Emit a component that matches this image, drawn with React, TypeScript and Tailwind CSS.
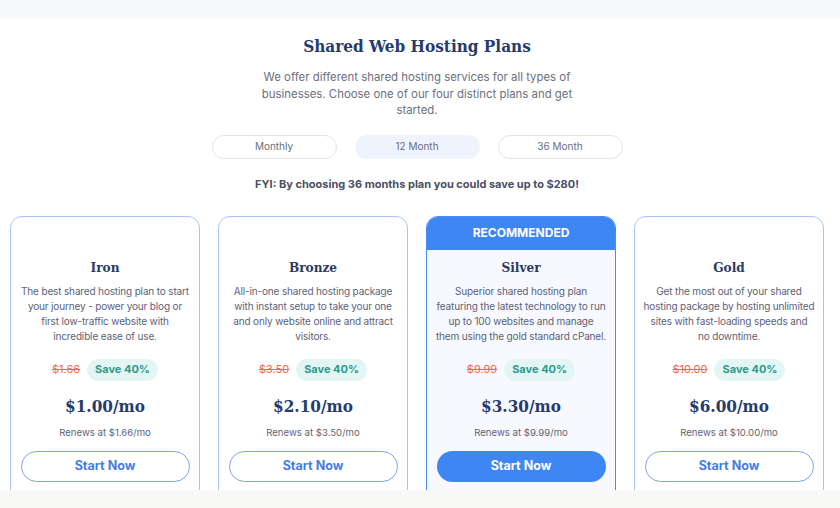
import React from "react";

const plans = [
  {
    name: "Iron",
    desc: ["The best shared hosting plan to start", "your journey - power your blog or", "first low-traffic website with", "incredible ease of use."],
    old: "$1.66",
    price: "$1.00/mo",
    renew: "Renews at $1.66/mo",
    rec: false,
  },
  {
    name: "Bronze",
    desc: ["All-in-one shared hosting package", "with instant setup to take your one", "and only website online and attract", "visitors."],
    old: "$3.50",
    price: "$2.10/mo",
    renew: "Renews at $3.50/mo",
    rec: false,
  },
  {
    name: "Silver",
    desc: ["Superior shared hosting plan", "featuring the latest technology to run", "up to 100 websites and manage", "them using the gold standard cPanel."],
    old: "$9.99",
    price: "$3.30/mo",
    renew: "Renews at $9.99/mo",
    rec: true,
  },
  {
    name: "Gold",
    desc: ["Get the most out of your shared", "hosting package by hosting unlimited", "sites with fast-loading speeds and", "no downtime."],
    old: "$10.00",
    price: "$6.00/mo",
    renew: "Renews at $10.00/mo",
    rec: false,
  },
];

const serif = { fontFamily: '"DejaVu Serif Condensed", "DejaVu Serif", "Liberation Serif", serif' };

export default function App() {
  return (
    <div className="w-[840px] h-[508px] bg-white overflow-hidden" style={{ fontFamily: 'Inter, "Noto Sans", sans-serif' }}>
      <div className="h-[18px] bg-[#f8f9fc]" />
      <div className="w-[834px] flex flex-col items-center">
        <h1 className="mt-[14px] text-[17px] leading-[28px] font-bold font-stretch-condensed text-[#263b6d]" style={serif}>
          Shared Web Hosting Plans
        </h1>
        <p className="mt-[9px] text-center text-[11.4px] leading-[16.5px] text-[#6b6f7c] whitespace-nowrap">
          <span className="block">We offer different shared hosting services for all types of</span>
          <span className="block">businesses. Choose one of our four distinct plans and get</span>
          <span className="block">started.</span>
        </p>
        <div className="mt-[16px] flex gap-[18px]">
          <div className="w-[125px] h-[24px] rounded-full border border-[#e1e4ea] flex items-center justify-center text-[10px] text-[#6b6f7c]">Monthly</div>
          <div className="w-[125px] h-[24px] rounded-full bg-[#eef3fd] flex items-center justify-center text-[10px] text-[#6b6f7c]">12 Month</div>
          <div className="w-[125px] h-[24px] rounded-full border border-[#e1e4ea] flex items-center justify-center text-[10px] text-[#6b6f7c]">36 Month</div>
        </div>
        <div className="mt-[16px] text-[11px] leading-[18px] font-bold text-[#4b5064]">
          FYI: By choosing 36 months plan you could save up to $280!
        </div>
      </div>
      <div className="mt-[23px] h-[274px] overflow-hidden pl-[10px] flex gap-[18px]">
        {plans.map((p) => (
          <div
            key={p.name}
            className={
              "w-[190px] h-[300px] shrink-0 rounded-[12px] border flex flex-col items-center overflow-hidden " +
              (p.rec ? "border-[#4a8af5] bg-[#f7f9fe]" : "border-[#a9c4f3] bg-white")
            }
          >
            {p.rec ? (
              <div className="w-full h-[33px] bg-[#3f86f5] flex items-center justify-center text-white text-[12px] font-bold">
                RECOMMENDED
              </div>
            ) : (
              <div className="h-[33px]" />
            )}
            <div className="mt-[7px] text-[13.5px] leading-[20px] font-bold font-stretch-condensed text-[#2a3a62]" style={serif}>
              {p.name}
            </div>
            <div className="mt-[7px] text-center text-[10px] tracking-[-0.15px] leading-[15px] text-[#5c6277] whitespace-nowrap">
              {p.desc.map((l) => (
                <div key={l}>{l}</div>
              ))}
            </div>
            <div className="mt-[15px] h-[22px] flex items-center gap-[7px]">
              <span className="text-[11px] text-[#f0684c] line-through">{p.old}</span>
              <span className="h-[22px] px-[8px] rounded-full bg-[#e3f6f4] flex items-center text-[11px] font-bold text-[#2f9a8c]">Save 40%</span>
            </div>
            <div className="mt-[11px] text-[17px] leading-[28px] font-bold font-stretch-condensed text-[#263b6d]" style={serif}>
              {p.price}
            </div>
            <div className="mt-[6px] text-[9.6px] leading-[14px] text-[#5f6475]">{p.renew}</div>
            <div
              className={
                "mt-[11px] w-[169px] h-[31px] rounded-full flex items-center justify-center text-[12.5px] font-bold " +
                (p.rec ? "bg-[#3f86f5] text-white" : "border border-[#7ba5f0] text-[#3f7de8]")
              }
            >
              Start Now
            </div>
          </div>
        ))}
      </div>
      <div className="h-[18px] bg-[#f9f9f8]" />
    </div>
  );
}
